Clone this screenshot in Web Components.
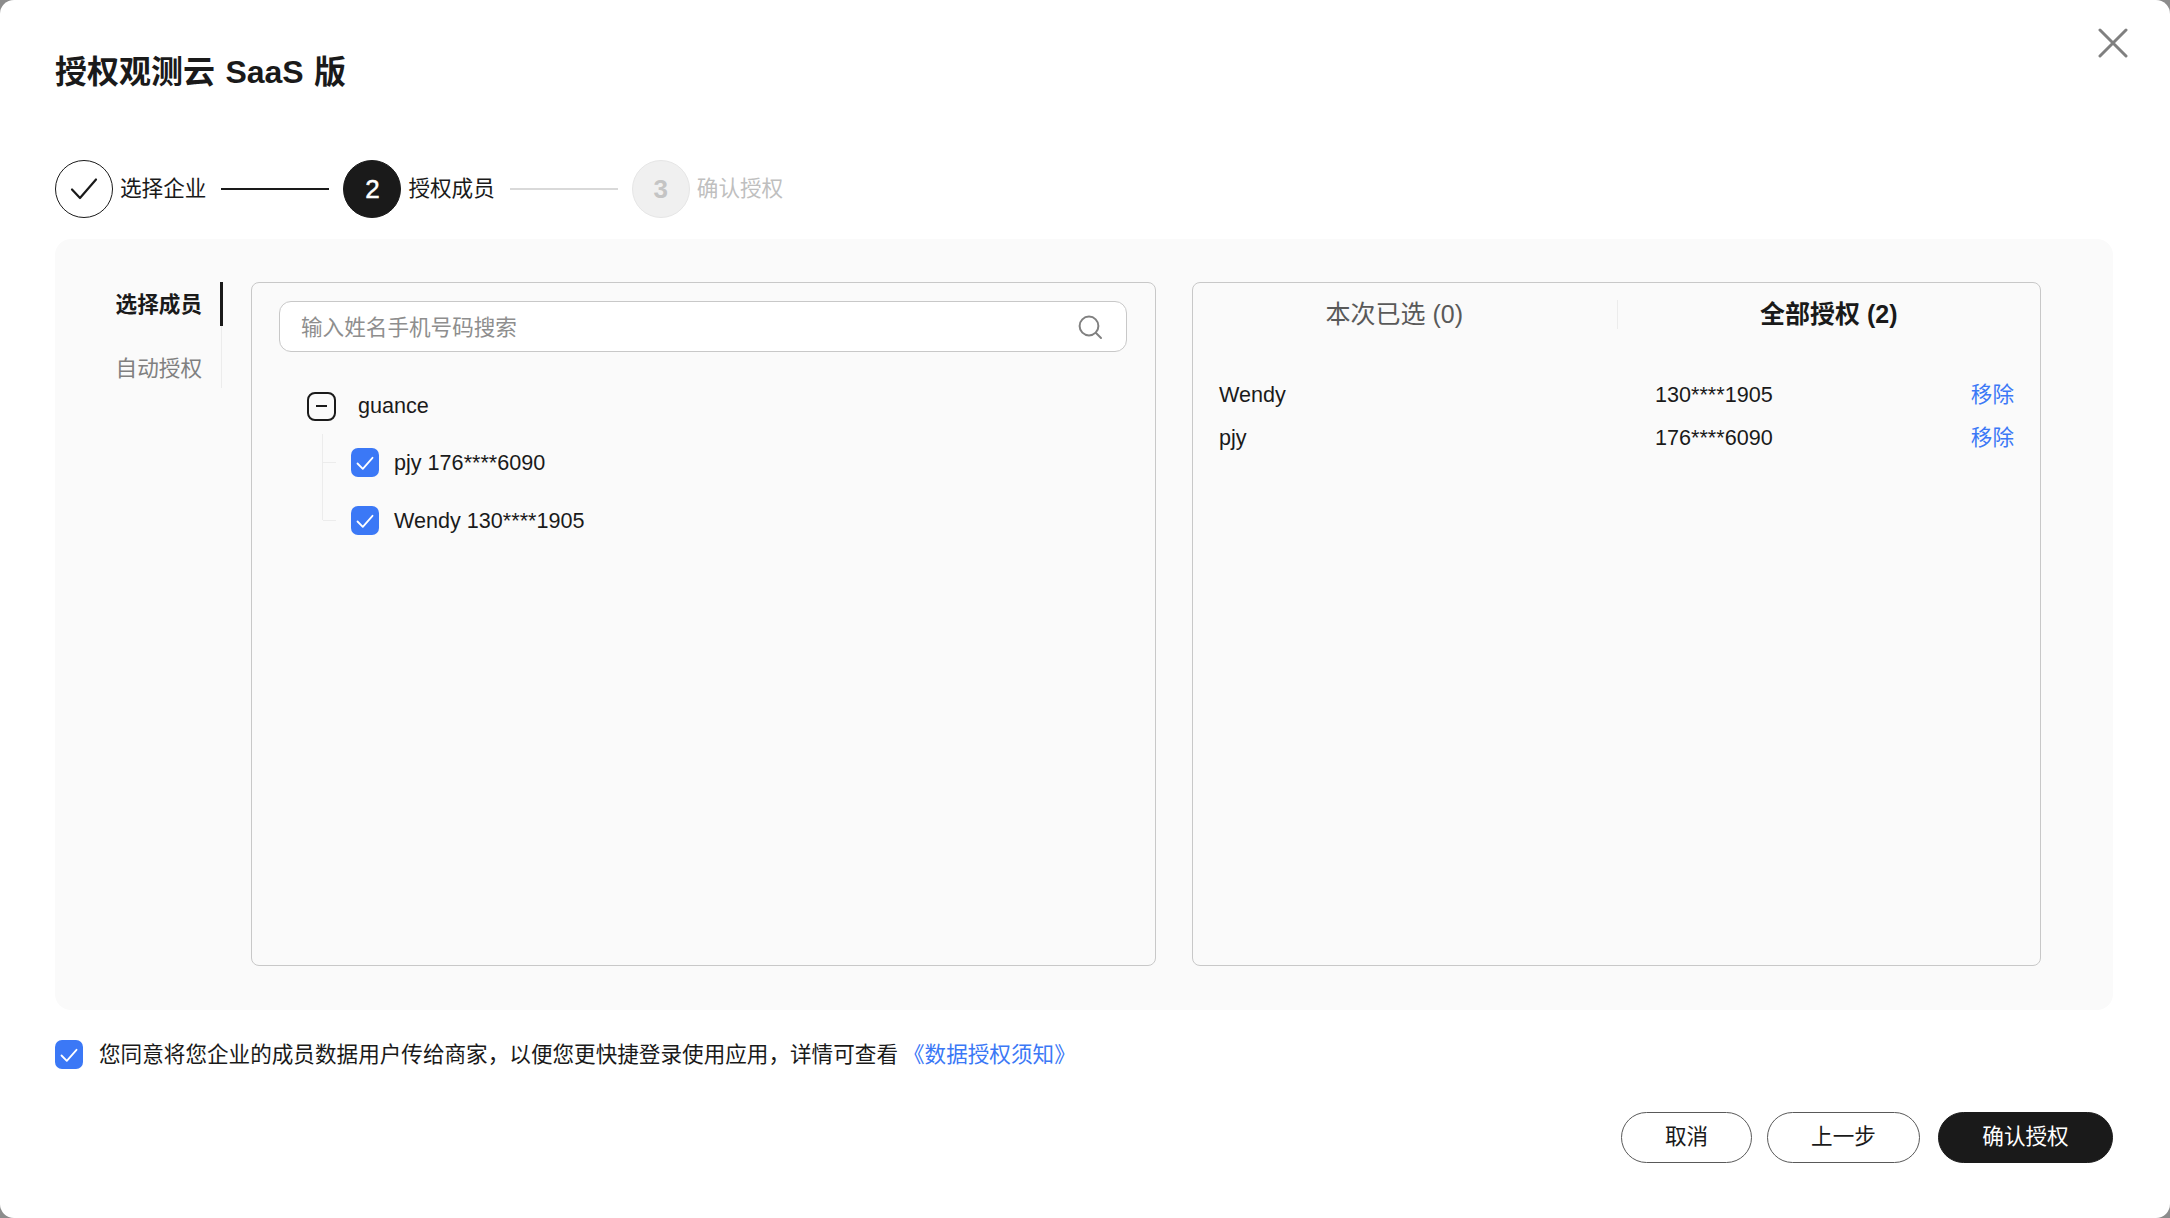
<!DOCTYPE html>
<html lang="zh-CN">
<head>
<meta charset="utf-8">
<title>授权观测云 SaaS 版</title>
<style>
html,body{margin:0;padding:0;background:#8c8c8c;}
body{width:2170px;height:1218px;overflow:hidden;font-family:"Liberation Sans","Noto Sans CJK SC",sans-serif;color:#1a1a1a;font-size:21.6px;}
</style>
</head>
<body>
<auth-modal></auth-modal>
<script>
const FONT='"Liberation Sans","Noto Sans CJK SC",sans-serif';
function def(name,html){
  customElements.define(name,class extends HTMLElement{
    constructor(){super();this.attachShadow({mode:'open'}).innerHTML=html;}
  });
}
const CHECK='<svg width="18" height="18" viewBox="0 0 18 18" fill="none"><path d="M1.5 9.5 6.8 14.8 16.5 3.8" stroke="#fff" stroke-width="1.8" stroke-linecap="round" stroke-linejoin="round"/></svg>';

def('ui-check',`<style>
:host{display:inline-flex;width:28px;height:29px;border-radius:7px;background:#3b78f6;align-items:center;justify-content:center;flex:none}
</style>${CHECK}`);

def('ui-step',`<style>
:host{display:flex;align-items:center;gap:7px;font-size:21.6px;color:#1a1a1a;white-space:nowrap}
.c{width:58px;height:58px;box-sizing:border-box;border-radius:50%;display:flex;align-items:center;justify-content:center;font-size:26px;border:1.5px solid #1a1a1a;background:#fff}
.l{padding-bottom:5px}
:host([state=active]) .c{background:#1a1a1a;color:#fff;border-color:#1a1a1a;-webkit-text-stroke:.5px #fff}
:host([state=todo]) .c{background:#f0f0f0;color:#c4c4c4;border-color:#e6e6e6;font-weight:700}
:host([state=todo]){color:#bfbfbf}
</style><span class="c"><slot name="mark"></slot></span><span class="l"><slot></slot></span>`);

def('ui-stepline',`<style>
:host{display:block;width:108px;height:2px;background:#1a1a1a;margin:0 14px 0 15px;flex:none}
:host([todo]){background:#d9d9d9}
</style>`);

def('ui-steps',`<style>
:host{display:flex;align-items:center;height:58px}
</style><slot></slot>`);

def('ui-sidenav',`<style>
:host{display:block;width:167px;flex:none;font-size:21.6px}
.w{border-right:1px solid #ececec;width:167px;height:106px;box-sizing:border-box}
.i{display:flex;justify-content:flex-end;padding-right:19px;color:#808080;box-sizing:border-box}
.a{height:44px;align-items:center;padding-bottom:3px;color:#1a1a1a;font-weight:700;border-right:3px solid #1a1a1a;margin-right:-1.5px;padding-right:17.5px}
.g{height:62px;align-items:flex-start;padding-top:25px}
</style><div class="w"><div class="i a">选择成员</div><div class="i g">自动授权</div></div>`);

def('ui-search',`<style>
:host{display:flex;align-items:center;justify-content:space-between;height:51px;box-sizing:border-box;background:#fff;border:1.5px solid #c8c8c8;border-radius:12px;padding:0 23px 0 21px;color:#8e8e8e;font-size:21.6px}
span{padding-bottom:3px}
svg{display:block}
</style><span>输入姓名手机号码搜索</span><svg width="26" height="26" viewBox="0 0 26 26" fill="none" stroke="#808080" stroke-width="2" stroke-linecap="round"><circle cx="12" cy="12" r="9.4"/><path d="M19 19l5 5"/></svg>`);

def('ui-tree',`<style>
:host{display:block;padding:40px 0 0 28px;font-size:21.6px;color:#1a1a1a}
.root{display:flex;align-items:center;height:28px;gap:22px}
.m{width:29px;height:29px;box-sizing:border-box;border:2px solid #1a1a1a;border-radius:8px;display:flex;align-items:center;justify-content:center}
.m:after{content:"";width:11px;height:2px;background:#1a1a1a}
.kids{margin-left:15px;margin-top:14px;border-left:1px solid #ececec;height:86px;padding-top:14px;box-sizing:border-box}
.r{display:flex;align-items:center;height:29px;gap:15px;margin-left:28px;position:relative}
.r span{padding-top:1px}
.r+.r{margin-top:29px}
.r:before{content:"";position:absolute;left:-28px;top:14px;width:13px;height:1px;background:#ececec}
</style>
<div class="root"><span class="m"></span><span>guance</span></div>
<div class="kids">
<div class="r"><ui-check></ui-check><span>pjy 176****6090</span></div>
<div class="r"><ui-check></ui-check><span>Wendy 130****1905</span></div>
</div>`);

def('ui-tabs',`<style>
:host{display:grid;grid-template-columns:1fr 1fr;grid-template-rows:29px;height:29px;margin-top:17px;font-size:25px;color:#595959}
div{display:flex;align-items:center;justify-content:center;white-space:nowrap;box-sizing:border-box;padding-bottom:0;height:29px;line-height:29px}
div span{margin-top:-1px}
.p{padding-right:21px}
.b{color:#1a1a1a;font-weight:700;border-left:1px solid #ececec}
</style><div class="p"><span>本次已选 (0)</span></div><div class="b"><span>全部授权 (2)</span></div>`);

def('ui-member',`<style>
:host{display:grid;grid-template-columns:436px 1fr auto;align-items:center;height:43px;font-size:21.6px;color:#1a1a1a}
a{color:#3b78f6;text-decoration:none;padding-bottom:4px}
</style><span><slot name="name"></slot></span><span><slot name="phone"></slot></span><a href="#">移除</a>`);

def('ui-btn',`<style>
:host{display:inline-flex;align-items:center;justify-content:center;height:51px;box-sizing:border-box;border-radius:26px;border:1.5px solid #595959;background:#fff;color:#1a1a1a;font-size:21.6px;flex:none;padding-bottom:6px}
:host([primary]){background:#1a1a1a;color:#fff;border-color:#1a1a1a}
</style><slot></slot>`);

def('auth-modal',`<style>
:host{display:block;width:2170px;height:1218px;box-sizing:border-box;background:#fff;border-radius:14px;padding:0 57px 0 55px;font-family:${FONT};color:#1a1a1a;position:relative}
h1{margin:0;padding-top:50px;height:100px;box-sizing:border-box;font-size:32px;line-height:44px;font-weight:700;word-spacing:1.5px}
.close{position:absolute;left:2098px;top:28px;display:block}
ui-steps{margin-top:60px}
.panel{margin-top:21px;height:771px;box-sizing:border-box;background:#fafafa;border-radius:16px;padding:43px 0 44px 0;display:flex}
.left,.right{box-sizing:border-box;border:1.5px solid #c8c8c8;border-radius:8px;height:684px}
.left{margin-left:29px;width:905px;padding:18px 28px 0 27px}
.right{margin-left:36px;width:849px}
.list{margin-top:44px;padding:0 26px}
.agree{display:flex;align-items:center;margin-top:30px;height:29px;gap:16px;font-size:21.6px;white-space:nowrap}
.agree span{padding-bottom:5px}
.agree a{color:#3b78f6;text-decoration:none;margin-left:5px}
.foot{display:flex;justify-content:flex-end;margin-top:43px}
.foot ui-btn:nth-child(1){width:131px}
.foot ui-btn:nth-child(2){width:153px;margin-left:15px}
.foot ui-btn:nth-child(3){width:175px;margin-left:18px}
</style>
<h1>授权观测云 SaaS 版</h1>
<svg class="close" width="30" height="30" viewBox="0 0 30 30" stroke="#808080" stroke-width="3" stroke-linecap="round"><path d="M2 2l26 26M28 2 2 28"/></svg>
<ui-steps>
<ui-step state="done"><svg slot="mark" width="28" height="24" viewBox="0 0 28 24" fill="none" stroke="#1a1a1a" stroke-width="2.2" stroke-linecap="round" stroke-linejoin="round" style="display:block"><path d="M2 12.5 10 21 26 2.5"/></svg>选择企业</ui-step>
<ui-stepline></ui-stepline>
<ui-step state="active"><span slot="mark">2</span>授权成员</ui-step>
<ui-stepline todo></ui-stepline>
<ui-step state="todo"><span slot="mark">3</span>确认授权</ui-step>
</ui-steps>
<div class="panel">
<ui-sidenav></ui-sidenav>
<div class="left"><ui-search></ui-search><ui-tree></ui-tree></div>
<div class="right">
<ui-tabs></ui-tabs>
<div class="list">
<ui-member><span slot="name">Wendy</span><span slot="phone">130****1905</span></ui-member>
<ui-member><span slot="name">pjy</span><span slot="phone">176****6090</span></ui-member>
</div>
</div>
</div>
<div class="agree"><ui-check></ui-check><span>您同意将您企业的成员数据用户传给商家，以便您更快捷登录使用应用，详情可查看<a href="#">《数据授权须知》</a></span></div>
<div class="foot"><ui-btn>取消</ui-btn><ui-btn>上一步</ui-btn><ui-btn primary>确认授权</ui-btn></div>
`);
</script>
</body>
</html>
